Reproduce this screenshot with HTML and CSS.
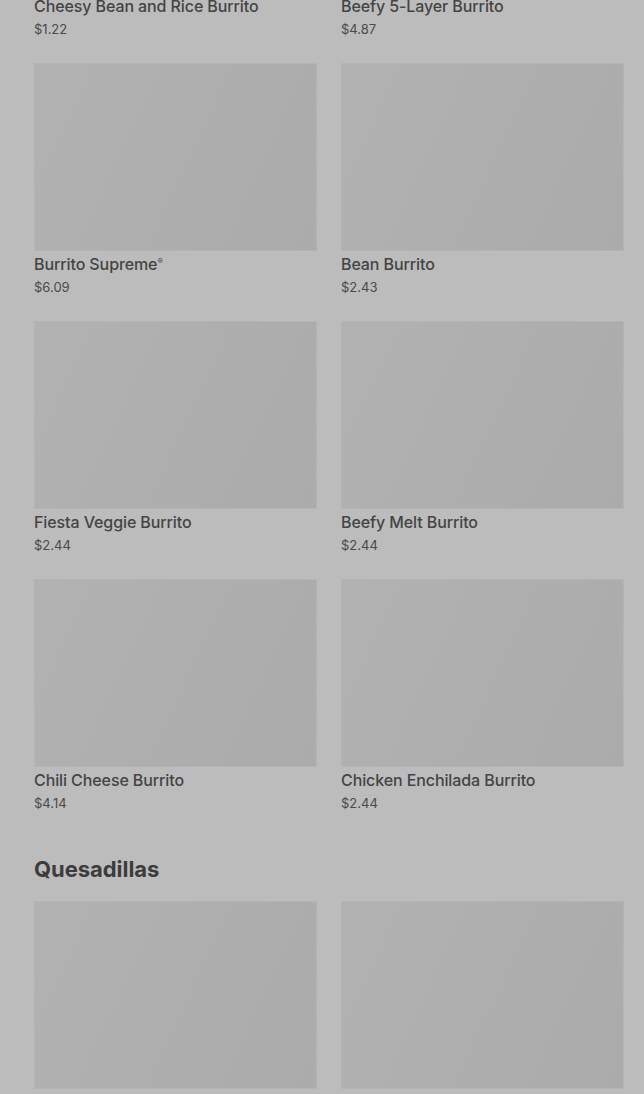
FILE: index.html
```html
<!DOCTYPE html>
<html lang="en">
<head>
    <meta charset="UTF-8">
    <meta name="viewport" content="width=device-width, initial-scale=1.0">
    <title>Menu - Burritos</title>
    <link rel="stylesheet" href="styles.css">
</head>
<body>
    <main class="menu">
        <section class="menu-section">
            <div class="item-grid">
                <div class="item-card">
                    <div class="item-image"></div>
                    <h3>Cheesy Bean and Rice Burrito</h3>
                    <p>$1.22</p>
                </div>
                <div class="item-card">
                    <div class="item-image"></div>
                    <h3>Beefy 5-Layer Burrito</h3>
                    <p>$4.87</p>
                </div>
                <div class="item-card">
                    <div class="item-image"></div>
                    <h3>Burrito Supreme<sup>&reg;</sup></h3>
                    <p>$6.09</p>
                </div>
                <div class="item-card">
                    <div class="item-image"></div>
                    <h3>Bean Burrito</h3>
                    <p>$2.43</p>
                </div>
                <div class="item-card">
                    <div class="item-image"></div>
                    <h3>Fiesta Veggie Burrito</h3>
                    <p>$2.44</p>
                </div>
                <div class="item-card">
                    <div class="item-image"></div>
                    <h3>Beefy Melt Burrito</h3>
                    <p>$2.44</p>
                </div>
                <div class="item-card">
                    <div class="item-image"></div>
                    <h3>Chili Cheese Burrito</h3>
                    <p>$4.14</p>
                </div>
                <div class="item-card">
                    <div class="item-image"></div>
                    <h3>Chicken Enchilada Burrito</h3>
                    <p>$2.44</p>
                </div>
            </div>
        </section>

        <section class="menu-section">
            <h2>Quesadillas</h2>
            <div class="item-grid">
                <div class="item-card">
                    <div class="item-image"></div>
                    <h3>Chicken Quesadilla</h3>
                    <p>$5.19</p>
                </div>
                <div class="item-card">
                    <div class="item-image"></div>
                    <h3>Steak Quesadilla</h3>
                    <p>$5.99</p>
                </div>
            </div>
        </section>
    </main>
</body>
</html>
```

FILE: styles.css
```css
body {
    font-family: Inter, 'Noto Sans', sans-serif;
    margin: 0;
    padding: 0;
    background-color: #bcbcbc;
    color: #424242;
    overflow: hidden;
}

.menu {
    margin-top: -195px;
    padding: 0 20px 0 34px;
}

.menu-section h2 {
    margin: 0;
    padding: 17px 0 17px;
    font-size: 22px;
    line-height: 30px;
    font-weight: 700;
    letter-spacing: -0.05px;
    color: #3c3c3c;
}

.item-grid {
    display: grid;
    grid-template-columns: 283px 283px;
    column-gap: 24px;
}

.item-card {
    height: 258px;
}

.item-image {
    height: 186px;
    border: 1px solid #b4b4b4;
    background: linear-gradient(115deg, #b2b2b2 0%, #aeaeae 55%, #ababab 100%);
}

.item-card h3 {
    margin: 3px 0 0;
    font-size: 16px;
    line-height: 20px;
    font-weight: 500;
    letter-spacing: -0.1px;
    color: #444;
}

.item-card h3 sup {
    font-size: 8px;
    line-height: 0;
    vertical-align: super;
}

.item-card p {
    margin: 5px 0 0;
    font-size: 13px;
    line-height: 17px;
    font-weight: 400;
    color: #4a4a4a;
}
```
